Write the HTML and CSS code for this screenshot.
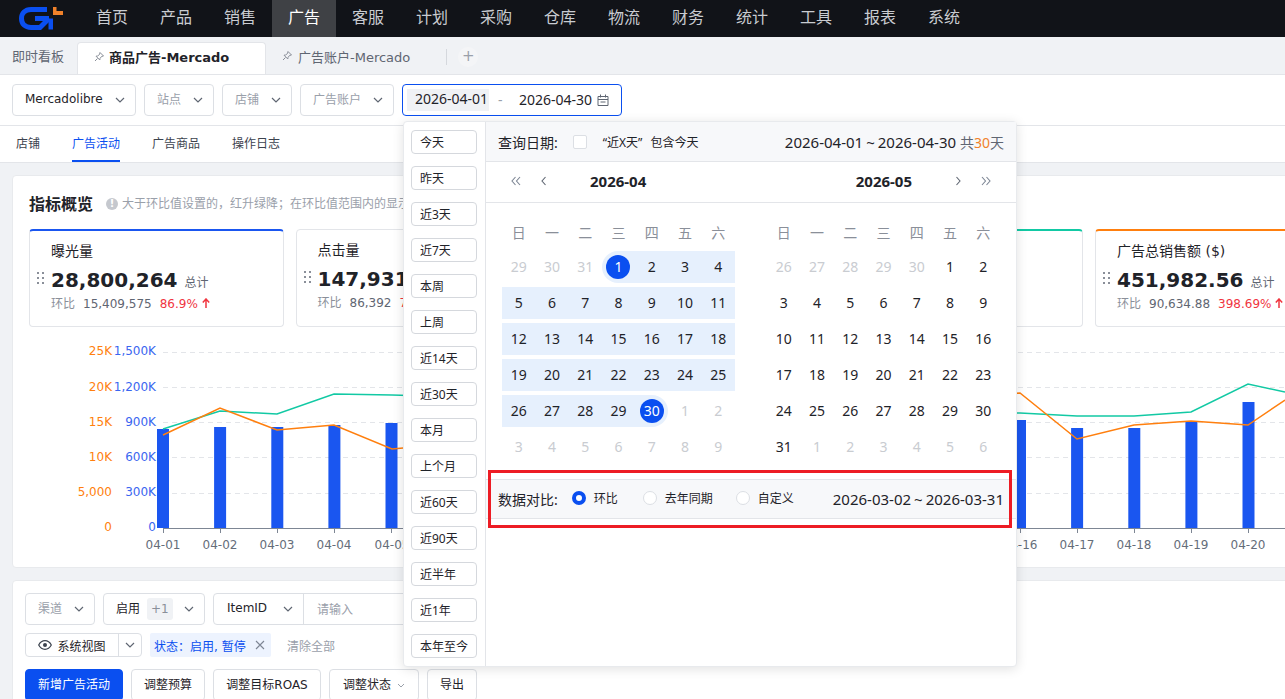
FILE: index.html
```html
<!DOCTYPE html>
<html lang="zh-CN">
  <head>
    <meta charset="UTF-8" />
    <title>商品广告-Mercado</title>
    <link rel="stylesheet" href="styles.css">
  </head>
  <body>
    <header class="topnav">
      <svg class="logo" width="46" height="24" viewBox="0 0 46 24">
        <path d="M28 2.500H12C6 2.500 2.500 6.500 2.500 11.500C2.500 17 6 20.500 12 20.500H21L30 11.500" fill="none" stroke="#0a4ff0" stroke-width="5"/>
        <path d="M16 9H30V11.500H34V22.500H29.500V14H16Z" fill="#0a4ff0"/>
        <path d="M34 0H37.500V4H44V8H34Z" fill="#f0812a"/>
      </svg>
      <a class="nav_item">首页</a>
      <a class="nav_item">产品</a>
      <a class="nav_item">销售</a>
      <a class="nav_item nav_active">广告</a>
      <a class="nav_item">客服</a>
      <a class="nav_item">计划</a>
      <a class="nav_item">采购</a>
      <a class="nav_item">仓库</a>
      <a class="nav_item">物流</a>
      <a class="nav_item">财务</a>
      <a class="nav_item">统计</a>
      <a class="nav_item">工具</a>
      <a class="nav_item">报表</a>
      <a class="nav_item">系统</a>
    </header>

    <div class="tabbar">
      <span class="tab_home">即时看板</span>
      <div class="tab tab_active">
        <svg class="pin" width="12" height="12" viewBox="0 0 12 12"><path d="M7 1.500L10.500 5L8.500 5.500L7 7.500L6.800 9L3 5.200L4.500 5L6.500 3.500ZM4.500 7.500L2 10" fill="none" stroke="#8a8f99"/></svg>
        <span>商品广告-Mercado</span>
      </div>
      <div class="tab">
        <svg class="pin" width="12" height="12" viewBox="0 0 12 12"><path d="M7 1.500L10.500 5L8.500 5.500L7 7.500L6.800 9L3 5.200L4.500 5L6.500 3.500ZM4.500 7.500L2 10" fill="none" stroke="#8a8f99"/></svg>
        <span>广告账户-Mercado</span>
      </div>
      <i class="tab_divider"></i>
      <span class="tab_plus">+</span>
    </div>

    <div class="filterbar">
      <div class="select sel_market"><span class="val">Mercadolibre</span><svg class="chev" width="10" height="6" viewBox="0 0 10 6"><path d="M1 1L5 5L9 1" fill="none" stroke="#5f6672" stroke-width="1.200"/></svg></div>
      <div class="select sel_site"><span class="ph">站点</span><svg class="chev" width="10" height="6" viewBox="0 0 10 6"><path d="M1 1L5 5L9 1" fill="none" stroke="#5f6672" stroke-width="1.200"/></svg></div>
      <div class="select sel_site"><span class="ph">店铺</span><svg class="chev" width="10" height="6" viewBox="0 0 10 6"><path d="M1 1L5 5L9 1" fill="none" stroke="#5f6672" stroke-width="1.200"/></svg></div>
      <div class="select sel_acct"><span class="ph">广告账户</span><svg class="chev" width="10" height="6" viewBox="0 0 10 6"><path d="M1 1L5 5L9 1" fill="none" stroke="#5f6672" stroke-width="1.200"/></svg></div>
      <div class="date_input">
        <span class="date_from">2026-04-01</span>
        <span class="date_sep">-</span>
        <span class="date_to">2026-04-30</span>
        <svg width="12" height="12" viewBox="0 0 12 12"><path d="M1 2.500H11V11.500H1ZM1 5.500H11M3.500 0.500V3.500M8.500 0.500V3.500M3.500 8H8.500" fill="none" stroke="#5f6672"/></svg>
      </div>

      <div class="picker">
        <div class="shortcuts">
          <button class="quick">今天</button>
          <button class="quick">昨天</button>
          <button class="quick">近3天</button>
          <button class="quick">近7天</button>
          <button class="quick">本周</button>
          <button class="quick">上周</button>
          <button class="quick">近14天</button>
          <button class="quick">近30天</button>
          <button class="quick">本月</button>
          <button class="quick">上个月</button>
          <button class="quick">近60天</button>
          <button class="quick">近90天</button>
          <button class="quick">近半年</button>
          <button class="quick">近1年</button>
          <button class="quick">本年至今</button>
        </div>
        <div class="picker_main">
          <div class="picker_head">
            <span class="lbl">查询日期:</span>
            <i class="checkbox"></i>
            <span class="small">“近X天” 包含今天</span>
            <span class="range_text">2026-04-01<u>~</u>2026-04-30 <em>共<b>30</b>天</em></span>
          </div>
          <div class="month_head">
            <div class="month_left">
              <span class="arrow"><svg width="10" height="10" viewBox="0 0 10 10"><path d="M4.500 1L1 5L4.500 9M9 1L5.500 5L9 9" fill="none" stroke="#7d8694" stroke-width="1.100"/></svg></span>
              <span class="arrow"><svg width="10" height="10" viewBox="0 0 10 10"><path d="M6.500 1L3 5L6.500 9" fill="none" stroke="#5f6672" stroke-width="1.100"/></svg></span>
              <strong>2026-04</strong>
            </div>
            <div class="month_right">
              <strong>2026-05</strong>
              <span class="arrow"><svg width="10" height="10" viewBox="0 0 10 10"><path d="M3.500 1L7 5L3.500 9" fill="none" stroke="#5f6672" stroke-width="1.100"/></svg></span>
              <span class="arrow"><svg width="10" height="10" viewBox="0 0 10 10"><path d="M1 1L4.500 5L1 9M5.500 1L9 5L5.500 9" fill="none" stroke="#7d8694" stroke-width="1.100"/></svg></span>
            </div>
          </div>
          <div class="calendars">
            <div class="cal">
              <span class="wd">日</span><span class="wd">一</span><span class="wd">二</span><span class="wd">三</span><span class="wd">四</span><span class="wd">五</span><span class="wd">六</span>
              <span class="d off">29</span><span class="d off">30</span><span class="d off">31</span><span class="d start"><b>1</b></span><span class="d in">2</span><span class="d in">3</span><span class="d in">4</span>
              <span class="d in">5</span><span class="d in">6</span><span class="d in">7</span><span class="d in">8</span><span class="d in">9</span><span class="d in">10</span><span class="d in">11</span>
              <span class="d in">12</span><span class="d in">13</span><span class="d in">14</span><span class="d in">15</span><span class="d in">16</span><span class="d in">17</span><span class="d in">18</span>
              <span class="d in">19</span><span class="d in">20</span><span class="d in">21</span><span class="d in">22</span><span class="d in">23</span><span class="d in">24</span><span class="d in">25</span>
              <span class="d in">26</span><span class="d in">27</span><span class="d in">28</span><span class="d in">29</span><span class="d end"><b>30</b></span><span class="d off">1</span><span class="d off">2</span>
              <span class="d off">3</span><span class="d off">4</span><span class="d off">5</span><span class="d off">6</span><span class="d off">7</span><span class="d off">8</span><span class="d off">9</span>
            </div>
            <div class="cal">
              <span class="wd">日</span><span class="wd">一</span><span class="wd">二</span><span class="wd">三</span><span class="wd">四</span><span class="wd">五</span><span class="wd">六</span>
              <span class="d off">26</span><span class="d off">27</span><span class="d off">28</span><span class="d off">29</span><span class="d off">30</span><span class="d">1</span><span class="d">2</span>
              <span class="d">3</span><span class="d">4</span><span class="d">5</span><span class="d">6</span><span class="d">7</span><span class="d">8</span><span class="d">9</span>
              <span class="d">10</span><span class="d">11</span><span class="d">12</span><span class="d">13</span><span class="d">14</span><span class="d">15</span><span class="d">16</span>
              <span class="d">17</span><span class="d">18</span><span class="d">19</span><span class="d">20</span><span class="d">21</span><span class="d">22</span><span class="d">23</span>
              <span class="d">24</span><span class="d">25</span><span class="d">26</span><span class="d">27</span><span class="d">28</span><span class="d">29</span><span class="d">30</span>
              <span class="d">31</span><span class="d off">1</span><span class="d off">2</span><span class="d off">3</span><span class="d off">4</span><span class="d off">5</span><span class="d off">6</span>
            </div>
          </div>
          <div class="compare">
            <span class="lbl">数据对比:</span>
            <label class="radio radio_on"><i></i>环比</label>
            <label class="radio radio_2"><i></i>去年同期</label>
            <label class="radio"><i></i>自定义</label>
            <span class="range_text">2026-03-02<u>~</u>2026-03-31</span>
          </div>
          <div class="redbox"></div>
        </div>
      </div>
    </div>

    <nav class="subtabs">
      <a>店铺</a>
      <a class="sub_active">广告活动</a>
      <a>广告商品</a>
      <a>操作日志</a>
    </nav>

    <main class="content">
      <section class="card overview">
        <div class="ov_head">
          <h3>指标概览</h3>
          <i class="info">!</i>
          <span class="hint">大于环比值设置的，红升绿降；在环比值范围内的显示灰色，可自定义环比值设置</span>
        </div>
        <div class="metrics">
          <div class="metric m_blue">
            <svg class="grip" width="8" height="13" viewBox="0 0 8 13"><path d="M0 0H2V2H0ZM5 0H7V2H5ZM0 5H2V7H0ZM5 5H7V7H5ZM0 10H2V12H0ZM5 10H7V12H5Z" fill="#8a8f99"/></svg>
            <div class="m_name">曝光量</div>
            <div class="m_val"><strong>28,800,264</strong><small>总计</small></div>
            <div class="m_cmp">环比<span class="m_prev">15,409,575</span><span class="m_up">86.9%</span><svg class="up" width="8" height="10" viewBox="0 0 8 10"><path d="M4 10V1.500M0.800 4.500L4 1L7.200 4.500" fill="none" stroke="#f0353f" stroke-width="1.500"/></svg></div>
          </div>
          <div class="metric">
            <svg class="grip" width="8" height="13" viewBox="0 0 8 13"><path d="M0 0H2V2H0ZM5 0H7V2H5ZM0 5H2V7H0ZM5 5H7V7H5ZM0 10H2V12H0ZM5 10H7V12H5Z" fill="#8a8f99"/></svg>
            <div class="m_name">点击量</div>
            <div class="m_val"><strong>147,931</strong><small>总计</small></div>
            <div class="m_cmp">环比<span class="m_prev">86,392</span><span class="m_up">71.2%</span></div>
          </div>
          <div class="metric"></div>
          <div class="metric m_teal"></div>
          <div class="metric m_orange">
            <svg class="grip" width="8" height="13" viewBox="0 0 8 13"><path d="M0 0H2V2H0ZM5 0H7V2H5ZM0 5H2V7H0ZM5 5H7V7H5ZM0 10H2V12H0ZM5 10H7V12H5Z" fill="#8a8f99"/></svg>
            <div class="m_name">广告总销售额 ($)</div>
            <div class="m_val"><strong>451,982.56</strong><small>总计</small></div>
            <div class="m_cmp">环比<span class="m_prev">90,634.88</span><span class="m_up">398.69%</span><svg class="up" width="8" height="10" viewBox="0 0 8 10"><path d="M4 10V1.500M0.800 4.500L4 1L7.200 4.500" fill="none" stroke="#f0353f" stroke-width="1.500"/></svg></div>
          </div>
        </div>
        <svg class="chart" width="1285" height="220" viewBox="0 338 1285 220">
          <g stroke="#e3e5e9" stroke-dasharray="5 4">
            <path d="M163 352.500H1285M163 387.500H1285M163 422.500H1285M163 457.500H1285M163 493.500H1285"/>
          </g>
          <g fill="#ff7f0e" text-anchor="end" class="tick">
            <text x="112" y="355">25K</text><text x="112" y="391">20K</text><text x="112" y="426">15K</text><text x="112" y="461">10K</text><text x="112" y="496">5,000</text><text x="112" y="531">0</text>
          </g>
          <g fill="#3a66f0" text-anchor="end" class="tick">
            <text x="156" y="355">1,500K</text><text x="156" y="391">1,200K</text><text x="156" y="426">900K</text><text x="156" y="461">600K</text><text x="156" y="496">300K</text><text x="156" y="531">0</text>
          </g>
          <g fill="#1a56f0">
            <rect x="157" y="429" width="12" height="99"/><rect x="214.100" y="427" width="12" height="101"/><rect x="271.300" y="427" width="12" height="101"/><rect x="328.400" y="425" width="12" height="103"/><rect x="385.500" y="423" width="12" height="105"/>
            <rect x="1014" y="420" width="12" height="108"/><rect x="1071.100" y="428" width="12" height="100"/><rect x="1128.300" y="428" width="12" height="100"/><rect x="1185.400" y="422" width="12" height="106"/><rect x="1242.500" y="402" width="12" height="126"/>
          </g>
          <path d="M163 528.500H1285" stroke="#7d8694"/>
          <path d="M163.500 528V533M220.500 528V533M277.500 528V533M334.500 528V533M391.500 528V533M1020.500 528V533M1077.500 528V533M1134.500 528V533M1191.500 528V533M1248.500 528V533" stroke="#7d8694"/>
          <polyline fill="none" stroke="#12c9a4" stroke-width="1.500" points="163,429 220,411 277,414 334,394 392,395 1020,413 1077,416 1134,416 1191,412 1248,384 1285,392"/>
          <polyline fill="none" stroke="#ff7f0e" stroke-width="1.500" points="163,435 220,408 277,430 334,425 392,449 1020,393 1077,439 1134,425 1191,421 1248,425 1285,400"/>
          <g fill="#656d7a" text-anchor="middle" class="tick">
            <text x="163" y="549">04-01</text><text x="220" y="549">04-02</text><text x="277" y="549">04-03</text><text x="334" y="549">04-04</text><text x="392" y="549">04-05</text>
            <text x="1020" y="549">04-16</text><text x="1077" y="549">04-17</text><text x="1134" y="549">04-18</text><text x="1191" y="549">04-19</text><text x="1248" y="549">04-20</text>
          </g>
        </svg>
      </section>

      <section class="card tablebox">
        <div class="row">
          <div class="select sel_channel"><span class="ph">渠道</span><svg class="chev" width="10" height="6" viewBox="0 0 10 6"><path d="M1 1L5 5L9 1" fill="none" stroke="#5f6672" stroke-width="1.200"/></svg></div>
          <div class="select sel_state"><span class="val">启用</span><span class="plus1">+1</span><svg class="chev" width="10" height="6" viewBox="0 0 10 6"><path d="M1 1L5 5L9 1" fill="none" stroke="#5f6672" stroke-width="1.200"/></svg></div>
          <div class="search_group">
            <div class="sg_type"><span class="val">ItemID</span><svg class="chev" width="10" height="6" viewBox="0 0 10 6"><path d="M1 1L5 5L9 1" fill="none" stroke="#5f6672" stroke-width="1.200"/></svg></div>
            <span class="ph sg_input">请输入</span>
          </div>
        </div>
        <div class="row row_views">
          <div class="viewbtn">
            <span class="vb_main">
              <svg width="14" height="10" viewBox="0 0 14 10"><path d="M0.700 5C2.200 2.200 4.400 0.700 7 0.700C9.600 0.700 11.800 2.200 13.300 5C11.800 7.800 9.600 9.300 7 9.300C4.400 9.300 2.200 7.800 0.700 5Z" fill="none" stroke="#3c434e" stroke-width="1.200"/><circle cx="7" cy="5" r="2" fill="#3c434e"/></svg>
              系统视图
            </span>
            <span class="vb_arrow"><svg width="10" height="6" viewBox="0 0 10 6"><path d="M1 1L5 5L9 1" fill="none" stroke="#5f6672" stroke-width="1.200"/></svg></span>
          </div>
          <span class="tag"><span>状态&#xFF1A;启用, 暂停</span><svg width="10" height="10" viewBox="0 0 10 10"><path d="M1 1L9 9M9 1L1 9" stroke="#7d8694" stroke-width="1.100"/></svg></span>
          <span class="clear">清除全部</span>
        </div>
        <div class="row row_actions">
          <button class="btn btn_primary">新增广告活动</button>
          <button class="btn">调整预算</button>
          <button class="btn btn_roas">调整目标ROAS</button>
          <button class="btn btn_state">调整状态<svg width="8" height="5" viewBox="0 0 8 5"><path d="M1 1L4 4L7 1" fill="none" stroke="#9aa0aa"/></svg></button>
          <button class="btn">导出</button>
        </div>
      </section>
    </main>
  </body>
</html>
```

FILE: styles.css
```css
* {
  margin: 0;
  padding: 0;
  box-sizing: border-box;
}

html,
body {
  height: 699px;
  overflow: hidden;
}

body {
  font-family: "DejaVu Sans", "Noto Sans CJK SC", sans-serif;
  font-size: 12px;
  color: #1f2329;
  background-color: #f0f2f5;
}

button {
  font: inherit;
  color: inherit;
  background: #fff;
}

/* top nav */
.topnav {
  height: 37px;
  display: flex;
  align-items: center;
  background-color: #111318;
}

.logo {
  margin: 0 15px 0 19px;
}

.nav_item {
  width: 64px;
  height: 37px;
  line-height: 35px;
  text-align: center;
  font-size: 16px;
  color: #c9ccd1;
}

.nav_active {
  color: #fff;
  background-color: #3f4145;
}

/* page tabs */
.tabbar {
  height: 37px;
  display: flex;
  align-items: flex-end;
  font-size: 13px;
  color: #5f6672;
}

.tab_home {
  width: 77px;
  height: 32px;
  padding-left: 12px;
  line-height: 30px;
}

.tab {
  height: 32px;
  display: flex;
  align-items: center;
  gap: 5px;
  padding: 0 15px 4px;
}

.tab_active {
  width: 189px;
  gap: 4px;
  color: #1f2329;
  font-weight: 700;
  background-color: #fff;
  border: 1px solid #e3e5e9;
  border-bottom: none;
  border-radius: 4px 4px 0 0;
}

.tab_divider {
  width: 1px;
  height: 16px;
  margin: 0 0 9px 21px;
  background-color: #d5d8dd;
}

.tab_plus {
  width: 20px;
  height: 20px;
  margin: 0 0 7px 11px;
  line-height: 19px;
  text-align: center;
  font-size: 15px;
  color: #9aa0aa;
  background-color: #f4f5f7;
  border-radius: 50%;
}

/* filter row */
.filterbar {
  position: relative;
  height: 52px;
  display: flex;
  gap: 8px;
  padding: 9px 12px;
  background-color: #fff;
  border-top: 1px solid #e3e5e9;
  border-bottom: 1px solid #e3e5e9;
}

.select {
  height: 32px;
  display: flex;
  align-items: center;
  justify-content: space-between;
  padding: 0 10px 1px 12px;
  background-color: #fff;
  border: 1px solid #dcdfe4;
  border-radius: 4px;
}

.select .val,
.select .ph {
  margin-top: -2px;
}

.sel_market { width: 124px; }
.sel_site { width: 70px; }
.sel_acct { width: 94px; }
.sel_channel { width: 70px; }
.sel_state { width: 102px; }

.ph {
  color: #9aa0aa;
}

.date_input {
  width: 220px;
  height: 32px;
  display: flex;
  align-items: center;
  padding-left: 4px;
  font-family: "Noto Sans", "Noto Sans CJK SC", sans-serif;
  font-size: 14px;
  border: 1px solid #0a4ff0;
  border-radius: 4px;
}

.date_from {
  width: 82px;
  padding: 0 0 2px 8px;
  line-height: 20px;
  white-space: nowrap;
  background-color: #f0f2f5;
}

.date_sep {
  width: 30px;
  margin-top: -2px;
  padding-left: 9px;
  color: #9aa0aa;
}

.date_to {
  width: 78px;
  margin-top: -2px;
  white-space: nowrap;
}

/* date picker popover */
.picker {
  position: absolute;
  left: 403px;
  top: 46px;
  width: 614px;
  height: 546px;
  display: flex;
  font-family: "Noto Sans", "Noto Sans CJK SC", sans-serif;
  font-size: 14px;
  background-color: #fff;
  border: 1px solid #e8eaed;
  border-radius: 4px;
  box-shadow: 0 2px 12px rgba(0, 0, 0, 0.12);
  z-index: 10;
}

.shortcuts {
  width: 82px;
  display: flex;
  flex-direction: column;
  gap: 12px;
  padding: 8px 7px 0;
  border-right: 1px solid #e3e5e9;
}

.quick {
  width: 66px;
  height: 24px;
  padding: 2px 0 0 8px;
  text-align: left;
  font-size: 12px;
  line-height: 20px;
  border: 1px solid #d5d8dd;
  border-radius: 4px;
}

.picker_main {
  position: relative;
  flex: 1;
}

.picker_head {
  height: 40px;
  display: flex;
  align-items: center;
  padding: 0 12px;
  background-color: #f7f8fa;
  border-bottom: 1px solid #e3e5e9;
}

.lbl {
  font-size: 14px;
}

.checkbox {
  width: 14px;
  height: 14px;
  margin: 0 16px 0 15px;
  background-color: #fff;
  border: 1px solid #dcdfe4;
  border-radius: 2px;
}

.small {
  font-size: 12px;
  word-spacing: 5px;
}

.range_text {
  margin-left: auto;
  font-size: 15px;
  white-space: nowrap;
}

.range_text u {
  margin: 0 3px;
  text-decoration: none;
}

.range_text em {
  font-size: 14px;
  font-style: normal;
  color: #5f6672;
}

.range_text b {
  font-weight: 400;
  color: #f0812a;
}

.month_head {
  height: 41px;
  display: flex;
  justify-content: space-between;
  padding-bottom: 2px;
  border-bottom: 1px solid #e3e5e9;
}

.month_left,
.month_right {
  display: flex;
  align-items: center;
  font-size: 15px;
}

.month_left {
  padding-left: 16px;
}

.month_right {
  padding-right: 16px;
}

.month_left strong {
  margin-left: 32px;
}

.month_right strong {
  margin-right: 32px;
}

.arrow {
  width: 28px;
  display: flex;
  justify-content: center;
}

.calendars {
  display: flex;
  gap: 32px;
  padding: 14px 16px 0;
}

.cal {
  width: 233px;
  display: grid;
  grid-template-columns: repeat(7, 1fr);
  grid-template-rows: 30px;
  grid-auto-rows: 32px;
  row-gap: 4px;
  text-align: center;
  line-height: 32px;
}

.wd {
  color: #8a8f99;
}

.off {
  color: #c9ccd1;
}

.in {
  background-color: #e6f0fd;
}

.start {
  background-color: #e6f0fd;
  border-radius: 16px 0 0 16px;
}

.end {
  background-color: #e6f0fd;
  border-radius: 0 16px 16px 0;
}

.start b,
.end b {
  display: block;
  width: 24px;
  height: 24px;
  margin: 4px auto;
  line-height: 24px;
  font-weight: 400;
  color: #fff;
  background-color: #0a4ff0;
  border-radius: 50%;
}

.compare {
  height: 40px;
  display: flex;
  align-items: center;
  margin-top: 16px;
  padding: 0 12px;
  background-color: #f7f8fa;
  border-top: 1px solid #e3e5e9;
  border-bottom: 1px solid #e3e5e9;
}

.radio {
  display: flex;
  align-items: center;
  gap: 8px;
  margin-top: -2px;
  font-size: 12px;
}

.radio i {
  width: 14px;
  height: 14px;
  background-color: #fff;
  border: 1px solid #dcdfe4;
  border-radius: 50%;
}

.radio_on {
  width: 71px;
  margin-left: 14px;
}

.radio_on i {
  border: 4px solid #0a4ff0;
}

.radio_2 {
  width: 93px;
}

.redbox {
  position: absolute;
  left: 2px;
  top: 348px;
  width: 524px;
  height: 58px;
  border: 3px solid #ed1c24;
}

/* sub tabs */
.subtabs {
  height: 37px;
  display: flex;
  gap: 32px;
  padding-left: 16px;
  line-height: 36px;
  color: #3c434e;
  background-color: #fff;
  border-bottom: 1px solid #e3e5e9;
}

.sub_active {
  color: #0a4ff0;
  border-bottom: 2px solid #0a4ff0;
}

/* main */
.content {
  padding: 12px 0 0 12px;
}

.card {
  width: 1285px;
  background-color: #fff;
  border: 1px solid #e8eaed;
  border-radius: 4px;
}

.overview {
  height: 393px;
  padding: 16px;
}

.ov_head {
  height: 24px;
  display: flex;
  align-items: center;
}

.ov_head h3 {
  margin-top: -2px;
  font-size: 16px;
  font-weight: 700;
}

.info {
  width: 12px;
  height: 12px;
  margin: 0 4px 0 13px;
  line-height: 12px;
  text-align: center;
  font-size: 10px;
  font-style: normal;
  font-weight: 700;
  color: #fff;
  background-color: #c5c8ce;
  border-radius: 50%;
}

.hint {
  margin-top: -4px;
  color: #9aa0aa;
  white-space: nowrap;
}

.metrics {
  display: flex;
  gap: 12px;
  margin-top: 13px;
}

.metric {
  position: relative;
  flex: 0 0 254.500px;
  height: 98px;
  padding: 10px 0 0 21px;
  background-color: #fff;
  border: 1px solid #e3e5e9;
  border-radius: 4px;
}

.m_blue { border-top: 2px solid #1a56f0; }
.m_teal { border-top: 2px solid #12c9a4; }
.m_orange { border-top: 2px solid #ff7f0e; }

.grip {
  position: absolute;
  left: 7px;
  top: 41px;
}

.m_name {
  font-size: 14px;
  line-height: 20px;
}

.m_val {
  display: flex;
  align-items: baseline;
  gap: 7px;
  height: 34px;
  line-height: 38px;
}

.m_val strong {
  font-size: 20px;
}

.m_val small {
  font-size: 12px;
  color: #5f6672;
}

.m_cmp {
  line-height: 18px;
  color: #8a8f99;
}

.m_prev {
  margin: 0 8px;
  color: #5f6672;
}

.m_up {
  color: #f0353f;
}

.up {
  margin-left: 4px;
}

.chart {
  display: block;
  margin: 11px 0 0 -29px;
}

.tick {
  font-size: 12px;
}

.tablebox {
  height: 200px;
  margin-top: 12px;
  padding: 12px;
}

.row {
  display: flex;
  gap: 8px;
}

.search_group {
  width: 600px;
  height: 32px;
  display: flex;
  align-items: center;
  border: 1px solid #dcdfe4;
  border-radius: 4px;
}

.sg_type {
  width: 90px;
  height: 30px;
  display: flex;
  align-items: center;
  justify-content: space-between;
  padding: 0 10px 0 13px;
  border-right: 1px solid #dcdfe4;
}

.sg_input {
  margin-top: -2px;
  padding-left: 13px;
}

.sg_type .val {
  margin-top: -2px;
}

.plus1 {
  margin-left: 7px;
  padding: 0 4px;
  line-height: 22px;
  color: #8a8f99;
  background-color: #f0f2f5;
  border-radius: 3px;
}

.sel_state .chev {
  margin-left: auto;
}

.row_views {
  height: 24px;
  margin-top: 8px;
  align-items: center;
}

.viewbtn {
  width: 117px;
  height: 24px;
  display: flex;
  border: 1px solid #dcdfe4;
  border-radius: 4px;
}

.vb_main {
  width: 93px;
  display: flex;
  align-items: center;
  justify-content: center;
  gap: 5px;
  border-right: 1px solid #dcdfe4;
}

.vb_arrow {
  flex: 1;
  display: flex;
  align-items: center;
  justify-content: center;
}

.tag {
  width: 121px;
  height: 24px;
  display: flex;
  align-items: center;
  justify-content: space-between;
  padding: 0 6px 0 4px;
  color: #0a4ff0;
  background-color: #edf3fe;
  border-radius: 2px;
}

.clear {
  margin-left: 8px;
  color: #9aa0aa;
}

.row_actions {
  margin-top: 12px;
}

.btn {
  height: 32px;
  padding: 0 12px 3px;
  border: 1px solid #dcdfe4;
  border-radius: 4px;
}

.btn_primary {
  color: #fff;
  background-color: #0a4ff0;
  border-color: #0a4ff0;
}

.btn_roas {
  width: 108px;
}

.btn_state {
  width: 90px;
}

.btn_state svg {
  margin-left: 6px;
  vertical-align: middle;
}
```
